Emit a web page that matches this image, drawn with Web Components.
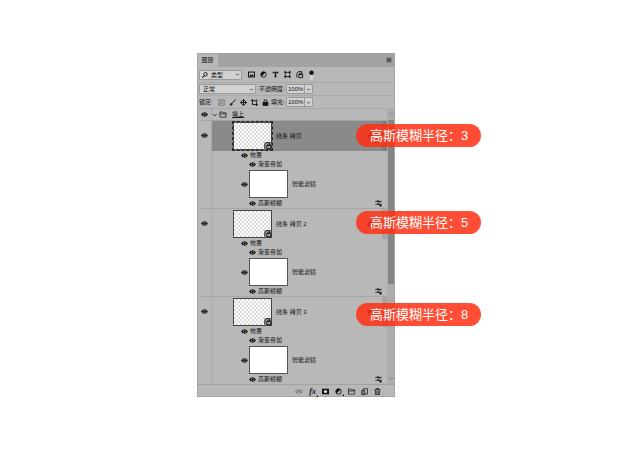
<!DOCTYPE html>
<html lang="zh-CN">
<head>
<meta charset="utf-8">
<title>图层</title>
<style>
body{margin:0;background:#fff;color:#111;font:6px/9px "Liberation Sans","Noto Sans CJK SC",sans-serif}
</style>
</head>
<body>
<demo-page></demo-page>
<script>
const make = (name, css, html) => customElements.define(name, class extends HTMLElement {
  connectedCallback() {
    if (this.shadowRoot) return;
    const root = this.attachShadow({mode: 'open'});
    const text = typeof html === 'function' ? html(this) : html;
    root.innerHTML = `<style>*{box-sizing:border-box}:host{box-sizing:border-box}button{all:unset;box-sizing:border-box;display:flex;cursor:pointer}${css}</style>${text}`;
  }
});
const S = 'fill="none" stroke="currentColor"';
const icons = {
  eye: '<path d="M0 5Q5-1.5 10 5Q5 11.5 0 5Z" fill="currentColor"/><circle cx="5" cy="5" r="2.4" fill="#777"/><circle cx="5" cy="5" r="1.6" fill="#111"/>',
  search: `<circle cx="6" cy="3.8" r="2.9" ${S} stroke-width="1.5"/><path d="M4 6L.7 9.5" ${S} stroke-width="1.7"/>`,
  down: `<path d="M2 3.5L5 6.5L8 3.5" ${S} stroke-width="1.3"/>`,
  image: `<rect x=".7" y="1.5" width="8.6" height="7" ${S} stroke-width="1.4"/><path d="M2 7.5L4 4.5L5.5 6L6.8 4.5L8.2 7.5Z" fill="currentColor"/>`,
  adjust: `<circle cx="5" cy="5" r="3.9" ${S} stroke-width="1.3"/><path d="M2.2 7.8A4 4 0 0 1 7.8 2.2Z" fill="currentColor"/>`,
  type: '<path d="M1 1H9V3.5H8L7.4 2.5H6V8L7.2 8.4V9H2.8V8.4L4 8V2.5H2.6L2 3.5H1Z" fill="currentColor"/>',
  shape: `<path d="M2 2H8V8H2Z" ${S} stroke-width="1.1"/><path d="M.5.5H3V3H.5ZM7 .5H9.5V3H7ZM.5 7H3V9.5H.5ZM7 7H9.5V9.5H7Z" fill="currentColor"/>`,
  smart: `<path d="M1.2 9.2V3.2L4 .8H8.4V5" ${S} stroke-width="1.2"/><path d="M4 5H9.5V9.5H4Z" ${S} stroke-width="1.3"/><path d="M5 5V3H8V5" ${S}/>`,
  toggle: '<rect x="2.5" y="5" width="5" height="8" fill="#d0d0d0"/><circle cx="5" cy="2.6" r="3.2" fill="#111"/>',
  menu: `<path d="M1 2H9M1 4H9M1 6H9M1 8H9" ${S} stroke-width="1"/>`,
  pixels: `<rect x="1" y="1" width="8" height="8" ${S}/><path d="M2 2h2v2H2zM6 2h2v2H6zM4 4h2v2H4zM2 6h2v2H2zM6 6h2v2H6z" fill="currentColor"/>`,
  brush: `<path d="M9.5.5L4.5 6" ${S} stroke-width="1.3"/><path d="M4 5.5Q2 6 2 8L.5 9.4Q5 9.8 5.2 7Z" fill="currentColor"/>`,
  move: `<path d="M5 1V9M1 5H9" ${S} stroke-width="1.3"/><path d="M5 0L7.4 2.8H2.6ZM5 10L7.4 7.2H2.6ZM0 5L2.8 2.6V7.4ZM10 5L7.2 2.6V7.4Z" fill="currentColor"/>`,
  artboard: `<path d="M0 2.3H6L8 4.4V10M2 0V8H10" ${S} stroke-width="1.3"/><path d="M6 1H9V4Z" fill="currentColor"/>`,
  lock: `<rect x="1" y="4.4" width="8" height="5.4" fill="currentColor"/><path d="M3 5V3A2 2 0 0 1 7 3V5" ${S} stroke-width="1.4"/>`,
  folder: `<path d="M.6 8.8V1.4H4L5 2.6H9.4V8.8ZM.6 4.2H9.4" ${S}/>`,
  link: `<path d="M4.5 3H2.4A2 2 0 0 0 2.4 7H4.5M5.5 3H7.6A2 2 0 0 1 7.6 7H5.5M3 5H7" ${S} stroke-width="1.2"/>`,
  mask: '<path d="M0 1H10V9H0Z" fill="currentColor"/><circle cx="5" cy="5" r="2.3" fill="#ddd"/>',
  add: `<path d="M3 1H9.3V8.5H3ZM1 3.5V9.5H6M1 3.5H5.5V8" ${S}/>`,
  trash: `<path d="M.8 2.3H9.2M3.5 2V.7H6.5V2M2 3V9.3H8V3M4 4V8.3M6 4V8.3" ${S} stroke-width="1.1"/>`,
  blend: `<path d="M.5 2H9.5M.5 6H9.5M3.8 0L6 4M4.4 4.5L7 8" ${S} stroke-width="1.3"/><path d="M6 7H10L8 10Z" fill="currentColor"/>`,
  up: `<path d="M2 6.5L5 3.5L8 6.5" ${S}/>`
};
make('px-icon', ':host{display:block;flex:none;width:7px;height:7px}svg{display:block;width:100%;height:100%;overflow:visible}',
  el => `<svg viewBox="0 0 10 10" aria-hidden="true">${icons[el.getAttribute('name')]}</svg>`);

make('combo-box', `:host{display:flex;align-items:center;height:10px;background:#d2d2d2;border:1px solid #999;border-radius:1px}
  px-icon{width:5px;height:5px;margin:0 1px}
  select,input{all:unset;flex:1;min-width:0;height:8px;padding-left:3px;font:inherit;line-height:8px;color:inherit}
  input{padding-left:1px}
  button{height:8px;border-left:1px solid #999;align-items:center}`,
  el => {
    const n = el.getAttribute('label'), v = el.getAttribute('value');
    return el.hasAttribute('editable')
      ? `<input aria-label="${n}" value="${v}"><button aria-label="${n}选项"><px-icon name="down"></px-icon></button>`
      : `<slot></slot><select aria-label="${n}"><option>${v}</option></select><px-icon name="down"></px-icon>`;
  });

make('panel-header', `:host{display:flex;height:14px;background:#a2a2a2;justify-content:space-between;align-items:center;padding-right:3px}
  .tab{height:14px;width:21px;background:#b8b8b8;align-items:center;justify-content:center}px-icon{width:6px;height:6px}`,
  '<button class="tab">图层</button><button aria-label="菜单"><px-icon name="menu"></px-icon></button>');

make('panel-options', `:host{display:block;background:#b8b8b8}
  div{display:flex;align-items:center;padding-left:2px;border-bottom:1px solid #a9a9a9;white-space:nowrap}
  .filter{height:16px}.mode,.locks{height:13px}
  .filter combo-box{width:43px}.filter>button{margin-left:5px}.filter>button:first-of-type{margin-left:6px}
  .mode>combo-box:first-child{width:57px}
  .value{width:27px}.mode span{width:30px;padding-left:3px}
  .locks button{margin-left:4px}.locks .name{width:15px}.locks .fill{width:17px;padding-left:2px}
  .faint{color:#777}.find{width:6px;height:6px;margin:0 0 0 2px}`,
  `<div class="filter"><combo-box label="滤镜类型" value="类型"><px-icon class="find" name="search"></px-icon></combo-box>
   ${['image','adjust','type','shape','smart','toggle'].map(i => `<button aria-label="${i}"><px-icon name="${i}"></px-icon></button>`).join('')}</div>
   <div class="mode"><combo-box label="混合模式" value="正常"></combo-box><span>不透明度:</span><combo-box class="value" editable label="不透明度" value="100%"></combo-box></div>
   <div class="locks"><span class="name">锁定:</span>${['pixels','brush','move','artboard','lock'].map((i, n) => `<button class="${n ? '' : 'faint'}" aria-label="${i}"><px-icon name="${i}"></px-icon></button>`).join('')}<span class="fill">填充:</span><combo-box class="value" editable label="填充" value="100%"></combo-box></div>`);

make('group-row', `:host{display:flex;height:11px;align-items:center}
  .eye{width:15px;height:11px;justify-content:center;align-items:center;border-right:1px solid #aaa}
  .arrow{width:6px;height:6px}.folder{width:8px;height:7px;margin-left:1px}.name{margin-left:5px;text-decoration:underline}`,
  '<button class="eye" aria-label="可见性"><px-icon name="eye"></px-icon></button><button aria-label="折叠"><px-icon class="arrow" name="down"></px-icon></button><px-icon class="folder" name="folder"></px-icon><span class="name"><slot></slot></span>');

make('layer-item', `:host{display:grid;grid-template-columns:15px 1fr;height:88px;border-top:1px solid #a6a6a6}
  .eye{align-items:flex-start;justify-content:center;padding-top:11px;border-right:1px solid #aaa}
  .main{height:30px;display:flex;align-items:center;padding-left:21px}
  :host([selected]) .main{background:#8a8a8a}
  .thumb{width:39px;height:28px;border:1px solid #444;display:flex;align-items:flex-end;justify-content:flex-end;background:repeating-conic-gradient(#dadada 0 25%,#fff 0 50%) 0 0/4px 4px}
  :host([selected]) .thumb{outline:1px dashed #222}
  .thumb px-icon{background:#aaa}
  .name{margin-left:4px;flex:1}.badge{margin-right:8px}
  .edge{width:5px;height:30px;background:#a4a4a4}:host([selected]) .edge{background:#7c7c7c}
  .row{height:9px;display:flex;align-items:center;gap:2px;padding-left:29px}
  .sub{padding-left:37px}.smart{height:30px}
  .row button{flex:none}
  .mask{width:39px;height:28px;background:#fff;border:1px solid #555;margin-left:-1px}.smart span{margin-left:2px}
  .opt{margin-left:auto;margin-right:5px}`,
  () => {
    const eye = '<button aria-label="可见性"><px-icon name="eye"></px-icon></button>';
    return `<button class="eye" aria-label="可见性"><px-icon name="eye"></px-icon></button><div>
    <div class="main"><div class="thumb"><px-icon name="smart"></px-icon></div><span class="name"><slot></slot></span><px-icon class="badge" name="adjust"></px-icon><span class="edge"></span></div>
    <div class="row">${eye}<span>效果</span></div><div class="row sub">${eye}<span>渐变叠加</span></div>
    <div class="row smart">${eye}<div class="mask"></div><span>智能滤镜</span></div>
    <div class="row sub">${eye}<span>高斯模糊</span><button class="opt" aria-label="混合选项"><px-icon name="blend"></px-icon></button></div></div>`;
  });

make('scroll-track', `:host{display:grid;grid-template-rows:11px 165fr 90fr 10px;width:8px;background:#acacac;justify-items:center;align-items:center;color:#777}
  .thumb{width:6px;height:100%;background:#858585}`,
  '<px-icon name="up"></px-icon><span class="thumb"></span><span></span><px-icon name="down"></px-icon>');

make('panel-footer', `:host{display:flex;height:13px;border-top:1px solid #a2a2a2;justify-content:flex-end;align-items:center;gap:6px;padding-right:14px}
  .fx{font:italic bold 8px/9px "Liberation Serif",serif}.off{color:#666}.off px-icon{width:8px}
  .more{position:relative}.more::after{content:"";position:absolute;right:-2px;bottom:-1px;border:1px solid;border-top-color:transparent;border-left-color:transparent}`,
  `<button class="off" aria-label="链接"><px-icon name="link"></px-icon></button><button class="fx more">fx</button>${['mask','adjust','folder','add','trash'].map(i => `<button class="${i === 'adjust' ? 'more' : ''}" aria-label="${i}"><px-icon name="${i}"></px-icon></button>`).join('')}`);

make('value-pill', `:host{position:absolute;left:159px;height:23px;padding:0 13px 0 14px;border-radius:12px;background:rgba(255,49,20,.86);color:#fff;display:flex;align-items:center;white-space:nowrap;font-size:13px;line-height:23px}`, '<slot></slot>');

make('layers-panel', `:host{display:block;position:relative;background:#b8b8b8;outline:1px solid #a4a4a4;outline-offset:-1px}
  .list{display:grid;grid-template-columns:1fr 8px}
  value-pill:nth-of-type(1){top:71px}value-pill:nth-of-type(2){top:158px}value-pill:nth-of-type(3){top:250px}`,
  `<panel-header></panel-header><panel-options></panel-options>
   <div class="list"><div><group-row>墙上</group-row><layer-item selected>线条 拷贝</layer-item><layer-item>线条 拷贝 2</layer-item><layer-item>线条 拷贝 3</layer-item></div><scroll-track></scroll-track></div>
   <panel-footer></panel-footer>
   <value-pill>高斯模糊半径：3</value-pill><value-pill>高斯模糊半径：5</value-pill><value-pill>高斯模糊半径：8</value-pill>`);

make('demo-page', ':host{display:grid;grid-template-columns:197fr minmax(198px,198fr) 245fr;padding-top:53px}layers-panel{grid-column:2}', '<layers-panel></layers-panel>');
</script>
</body>
</html>
